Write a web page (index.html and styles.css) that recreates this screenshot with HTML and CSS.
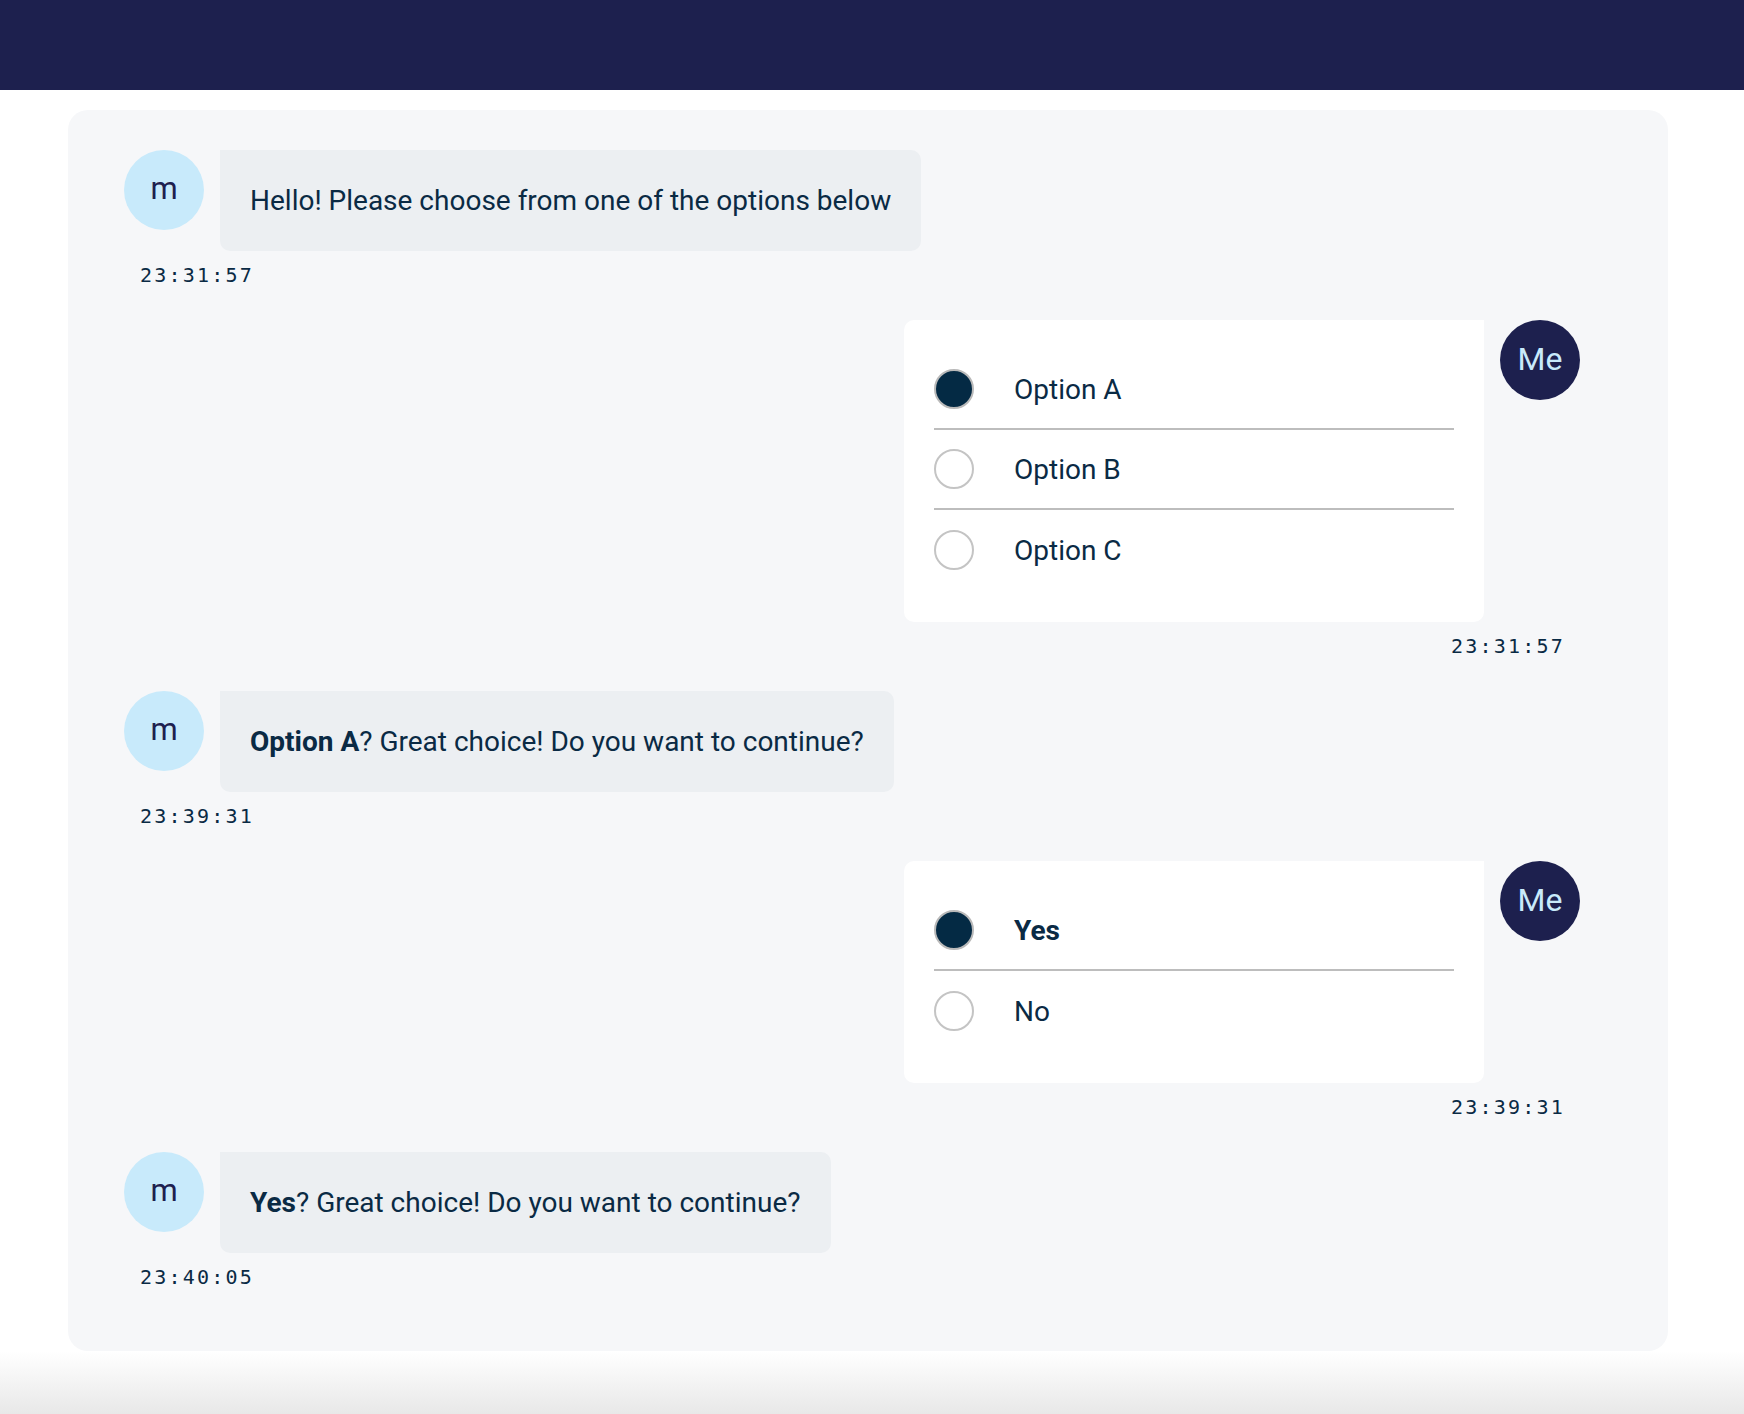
FILE: index.html
```html
<!DOCTYPE html>
<html lang="en">
<head>
<meta charset="utf-8">
<title>Chat</title>
<link rel="stylesheet" href="styles.css">
</head>
<body>
<header class="topbar"></header>
<main class="chat">
  <section class="group bot">
    <div class="row">
      <div class="avatar avatar-bot">m</div>
      <div class="bubble">Hello! Please choose from one of the options below</div>
    </div>
    <div class="time">23:31:57</div>
  </section>

  <section class="group me">
    <div class="row">
      <div class="card">
        <div class="opt"><span class="radio checked"></span><span class="label">Option A</span></div>
        <div class="opt"><span class="radio"></span><span class="label">Option B</span></div>
        <div class="opt"><span class="radio"></span><span class="label">Option C</span></div>
      </div>
      <div class="avatar avatar-me">Me</div>
    </div>
    <div class="time">23:31:57</div>
  </section>

  <section class="group bot">
    <div class="row">
      <div class="avatar avatar-bot">m</div>
      <div class="bubble"><b>Option A</b>? Great choice! Do you want to continue?</div>
    </div>
    <div class="time">23:39:31</div>
  </section>

  <section class="group me">
    <div class="row">
      <div class="card">
        <div class="opt"><span class="radio checked"></span><span class="label"><b>Yes</b></span></div>
        <div class="opt"><span class="radio"></span><span class="label">No</span></div>
      </div>
      <div class="avatar avatar-me">Me</div>
    </div>
    <div class="time">23:39:31</div>
  </section>

  <section class="group bot">
    <div class="row">
      <div class="avatar avatar-bot">m</div>
      <div class="bubble"><b>Yes</b>? Great choice! Do you want to continue?</div>
    </div>
    <div class="time">23:40:05</div>
  </section>
</main>
<div class="fade"></div>
</body>
</html>
```

FILE: styles.css
```css
* { box-sizing: border-box; }
html, body { margin: 0; padding: 0; }
body {
  background: #ffffff;
  font-family: Roboto, "Noto Sans", Arial, sans-serif;
  color: #0a2a44;
  display: flex;
  flex-direction: column;
  min-height: 1414px;
}
.topbar {
  height: 90px;
  background: #1d204e;
  flex: none;
}
.chat {
  margin: 20px 76px 0 68px;
  background: #f6f7f9;
  border-radius: 20px;
  padding: 40px 88px 61px 56px;
  display: flex;
  flex-direction: column;
  gap: 32px;
}
.group { display: flex; flex-direction: column; }
.row { display: flex; align-items: flex-start; gap: 16px; }
.me .row { justify-content: flex-end; }
.avatar {
  width: 80px;
  height: 80px;
  border-radius: 50%;
  flex: none;
  display: flex;
  align-items: center;
  justify-content: center;
  font-size: 31px;
  line-height: 1;
  padding-bottom: 3px;
}
.avatar-bot { background: #c8eafb; color: #1d204e; }
.avatar-me { background: #1d204e; color: #c8eafb; font-size: 32px; }
.bubble {
  background: #eceff2;
  border-radius: 0 10px 10px 10px;
  padding: 30px 30px;
  font-size: 28px;
  line-height: 41px;
}
.bubble b { font-weight: 700; }
.card {
  width: 580px;
  background: #ffffff;
  border-radius: 10px 0 10px 10px;
  padding: 30px 30px 32px;
}
.opt {
  height: 80px;
  display: flex;
  align-items: center;
  border-bottom: 2px solid #bdbdbd;
  font-size: 28px;
}
.opt:last-child { border-bottom: none; }
.radio {
  width: 40px;
  height: 40px;
  border-radius: 50%;
  border: 2px solid #c4c4c4;
  background: #ffffff;
  flex: none;
  margin-right: 40px;
}
.radio.checked { background: #042a44; border-color: #b9b9b9; }
.time {
  margin-top: 11px;
  line-height: 26px;
  height: 26px;
  font-family: "DejaVu Sans Mono", "Liberation Mono", monospace;
  font-size: 20px;
  letter-spacing: 2.2px;
  padding: 0 16px;
  color: #0a2a44;
}
.me .time { text-align: right; padding-right: 15px; }
.fade {
  flex: 1;
  min-height: 50px;
  background: linear-gradient(#ffffff, #e8e8e8);
}
```
